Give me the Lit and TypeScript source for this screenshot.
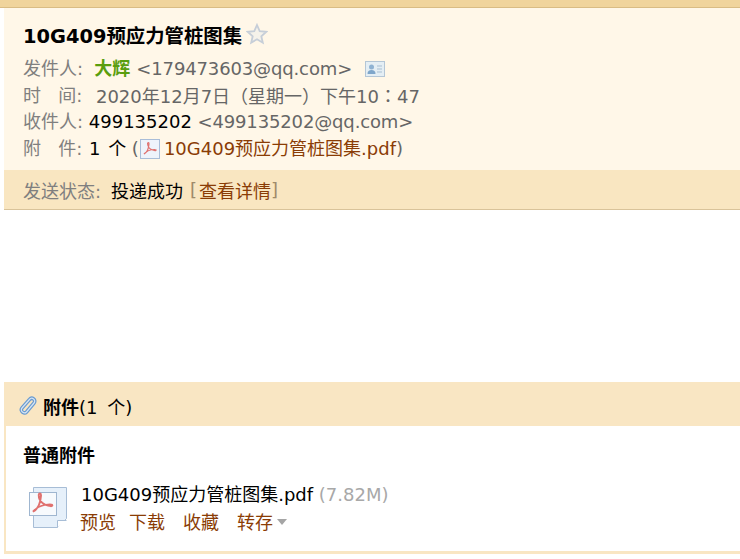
import { LitElement, html, svg, css } from "lit";
import { customElement } from "lit/decorators.js";

const pdfMark = svg`<path d="M4 15c2.600-1.200 4.600-5.200 5-10 .1-1.600-1.400-1.800-1.400-.2 0 3.600 3 6.400 7.400 6.800 1.500.1 1.500-1.100 0-1.100-3.800-.1-8.400 1.500-11 4.500z" fill="none" stroke="#e0716f" stroke-width="1.200"/>`;

@customElement("app-root")
export class AppRoot extends LitElement {
  static styles = css`
    :host {
      display: block;
      width: 740px;
      height: 559px;
      overflow: hidden;
      background: #fff;
      font-family: "DejaVu Sans", "Noto Sans CJK SC", sans-serif;
      font-size: 18px;
      color: #000;
    }
    .bar {
      height: 8px;
      box-sizing: border-box;
      background: #f0d49c;
      border-bottom: 1px solid #d9bc84;
    }
    .main { padding-left: 4px; }
    .head {
      border-bottom: 1px solid #d9c39a;
      background: #fff7e8;
      height: 202px;
      box-sizing: border-box;
      display: flex;
      flex-direction: column;
    }
    .top {
      flex: 1;
      padding: 11px 0 0 19px;
    }
    .title {
      display: flex;
      align-items: center;
      height: 30px;
      margin-bottom: 7px;
      font-size: 19.4px;
      font-weight: 700;
      gap: 4px;
    }
    .row {
      height: 26.6px;
      line-height: 26px;
      white-space: nowrap;
      display: flex;
      align-items: center;
    }
    .lab { color: #7f7f7f; }
    .gray { color: #666; }
    .mail { letter-spacing: -0.14px; }
    .sender { color: #5a9e0f; font-weight: 700; margin: 0 6px 0 5px; }
    .time { margin-left: 8px; }
    .tc { font-family: "Noto Sans CJK TC", sans-serif; }
    .cnt-top { margin-left: 1px; word-spacing: 2px; }
    .link { color: #8a3c05; }
    .dim { color: #666; }
    .status {
      height: 39px;
      background: #f9e6c1;
      display: flex;
      align-items: center;
      padding-left: 19px;
      white-space: nowrap;
    }
    .status .lab { width: 88px; }
    .status .bracket { color: #a08a6a; margin: 0 2px 0 7px; }
    .status .bracket.end { margin: 0; }
    .gap { height: 172px; }
    .att {
      border: solid #f9e6c3;
      border-width: 0 0 3px 2px;
      height: 172px;
      box-sizing: border-box;
      display: flex;
      flex-direction: column;
    }
    .att-head {
      height: 44px;
      box-sizing: border-box;
      padding: 3px 0 0 14px;
      margin-left: -2px;
      background: #f9e6c3;
      display: flex;
      align-items: center;
      white-space: nowrap;
    }
    .att-head b { margin-left: 5px; }
    .att-head .cnt { word-spacing: 4px; }
    .att-body { padding: 15px 0 0 17px; }
    .sec { font-weight: 700; height: 30px; line-height: 30px; }
    .item { display: flex; margin-top: 13px; margin-left: 4px; gap: 8px; }
    .name { height: 28px; line-height: 28px; white-space: nowrap; margin-top: -3px; }
    .size { color: #a8a8a8; }
    .acts { display: flex; align-items: center; height: 28px; color: #8a3c05; margin: -2px 0 0 -1px; }
    .acts span { margin-right: 18px; }
    .acts span:nth-child(1) { margin-right: 13px; }
    .acts span:nth-child(4) { margin-right: 4px; }
    .caret { width: 0; height: 0; border: 5px solid transparent; border-top: 6px solid #a5a5a5; border-bottom: 0; margin-top: 2px; }
    svg { display: block; flex: none; }
  `;

  render() {
    return html`
      <div class="bar"></div>
      <div class="main">
        <div class="head">
          <div class="top">
            <div class="title">
              <span>10G409预应力管桩图集</span>
              <svg width="22" height="22" viewBox="0 0 22 22"><path d="M11 2l2.700 6.100 6.600.7-5 4.400 1.500 6.500L11 16.300 5.200 19.700l1.500-6.500-5-4.400 6.600-.7z" fill="#f5f2ea" stroke="#c6ced8" stroke-width="1.800"/></svg>
            </div>
            <div class="row">
              <span class="lab">发件人:</span><span class="sender">&nbsp;大辉</span><span class="gray mail">&lt;179473603@qq.com&gt;</span>
              <svg style="margin-left:13px" width="20" height="16" viewBox="0 0 20 16"><rect x=".5" y=".5" width="19" height="15" fill="#e4eef4" stroke="#b4c6d6"/><circle cx="6.500" cy="6" r="2.500" fill="#8fb2d2"/><path d="M2.500 13c0-3 1.500-4 4-4s4 1 4 4z" fill="#7fa6ca"/><path d="M12 5h5M12 8h5M12 11h5" stroke="#a9bfd2"/></svg>
            </div>
            <div class="row"><span class="lab">时&nbsp;&nbsp;&nbsp;间:&nbsp;</span><span class="gray time">2020年12月7日（星期一）下午10<span class="tc">：</span>47</span></div>
            <div class="row"><span class="lab">收件人:&nbsp;</span><span>499135202</span><span class="gray mail">&nbsp;&lt;499135202@qq.com&gt;</span></div>
            <div class="row">
              <span class="lab">附&nbsp;&nbsp;&nbsp;件:&nbsp;</span><span class="cnt-top">1 个</span><span class="dim">&nbsp;(</span>
              <svg style="margin:0 4px 0 1px" width="20" height="20" viewBox="0 0 20 20"><rect x=".5" y=".5" width="19" height="19" fill="#eef3fb" stroke="#a9bdd8"/>${pdfMark}</svg>
              <span class="link">10G409预应力管桩图集.pdf</span><span class="dim">)</span>
            </div>
          </div>
          <div class="status">
            <span class="lab">发送状态:</span><span>投递成功</span><span class="bracket">[</span><span class="link">查看详情</span><span class="bracket end">]</span>
          </div>
        </div>
        <div class="gap"></div>
        <div class="att">
          <div class="att-head">
            <svg width="20" height="22" viewBox="0 0 20 22"><path d="M4 13 11.500 4.500c2.500-3 7 .5 4.500 3.500L8.500 17c-2.200 2.500-7 -1-4.500-4" fill="none" stroke="#6a9bcf" stroke-width="3.600"/><path d="M4 13 11.500 4.500c2.500-3 7 .5 4.500 3.500L8.500 17c-2.200 2.500-7 -1-4.500-4" fill="none" stroke="#d6e5f5" stroke-width="1.200"/></svg>
            <b>附件</b><span class="cnt">(1 个)</span>
          </div>
          <div class="att-body">
            <div class="sec">普通附件</div>
            <div class="item">
              <svg width="46" height="46" viewBox="0 0 46 46">
                <path d="M6.500 3.500h33v31l-9 9h-24z" fill="#e6f0fa" stroke="#a7bdd6"/>
                <path d="M30.500 43.500v-7h9" fill="#fff" stroke="#a7bdd6"/>
                <rect x="2.500" y="8.500" width="27" height="23" fill="#f7fafd" stroke="#9fb6d0"/>
                <g transform="translate(-.4 3.600) scale(1.600)">${pdfMark}</g>
              </svg>
              <div>
                <div class="name">10G409预应力管桩图集.pdf <span class="size">(7.82M)</span></div>
                <div class="acts"><span>预览</span><span>下载</span><span>收藏</span><span>转存</span><i class="caret"></i></div>
              </div>
            </div>
          </div>
        </div>
      </div>
    `;
  }
}
